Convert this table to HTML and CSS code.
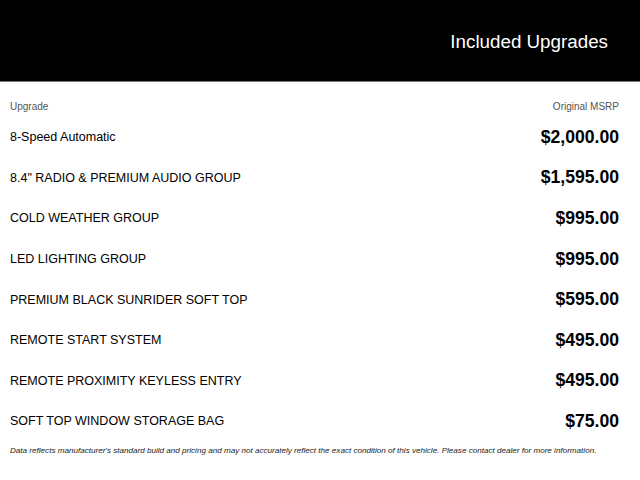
FILE: index.html
```html
<!DOCTYPE html>
<html>
<head>
<meta charset="utf-8">
<link rel="stylesheet" href="styles.css">
</head>
<body>
<header class="hero">
  <h1 class="title">Included Upgrades</h1>
</header>
<main class="content">
  <div class="head-row">
    <span>Upgrade</span>
    <span>Original MSRP</span>
  </div>
  <ul class="list">
    <li class="row"><span class="name">8-Speed Automatic</span><span class="price">$2,000.00</span></li>
    <li class="row"><span class="name">8.4" RADIO &amp; PREMIUM AUDIO GROUP</span><span class="price">$1,595.00</span></li>
    <li class="row"><span class="name">COLD WEATHER GROUP</span><span class="price">$995.00</span></li>
    <li class="row"><span class="name">LED LIGHTING GROUP</span><span class="price">$995.00</span></li>
    <li class="row"><span class="name">PREMIUM BLACK SUNRIDER SOFT TOP</span><span class="price">$595.00</span></li>
    <li class="row"><span class="name">REMOTE START SYSTEM</span><span class="price">$495.00</span></li>
    <li class="row"><span class="name">REMOTE PROXIMITY KEYLESS ENTRY</span><span class="price">$495.00</span></li>
    <li class="row"><span class="name">SOFT TOP WINDOW STORAGE BAG</span><span class="price">$75.00</span></li>
  </ul>
  <p class="note">Data reflects manufacturer's standard build and pricing and may not accurately reflect the exact condition of this vehicle. Please contact dealer for more information.</p>
</main>
</body>
</html>
```
FILE: styles.css
```css
* { box-sizing: border-box; }
html, body { margin: 0; padding: 0; background: #fff; }
body { font-family: "Liberation Sans", Arial, sans-serif; color: #000; }
.hero {
  background: #000;
  height: 82px;
  border-bottom: 1px solid #777;
  display: flex;
  justify-content: flex-end;
  padding: 31px 32px 0 0;
}
.title {
  margin: 0;
  color: #fff;
  font-weight: normal;
  font-size: 18.8px;
  line-height: 22px;
}
.content { padding: 0 21px 0 10px; }
.head-row {
  display: flex;
  justify-content: space-between;
  font-size: 10px;
  color: #555;
  padding-top: 18px;
  line-height: 13px;
}
.list { list-style: none; margin: 4px 0 0; padding: 0; }
.row {
  display: flex;
  justify-content: space-between;
  align-items: center;
  height: 40.6px;
}
.name { font-size: 12.5px; }
.price { font-size: 17.6px; font-weight: bold; }
.note {
  margin: 4px 0 0;
  font-size: 8.1px;
  font-style: italic;
  color: #222;
  white-space: nowrap;
}
```
